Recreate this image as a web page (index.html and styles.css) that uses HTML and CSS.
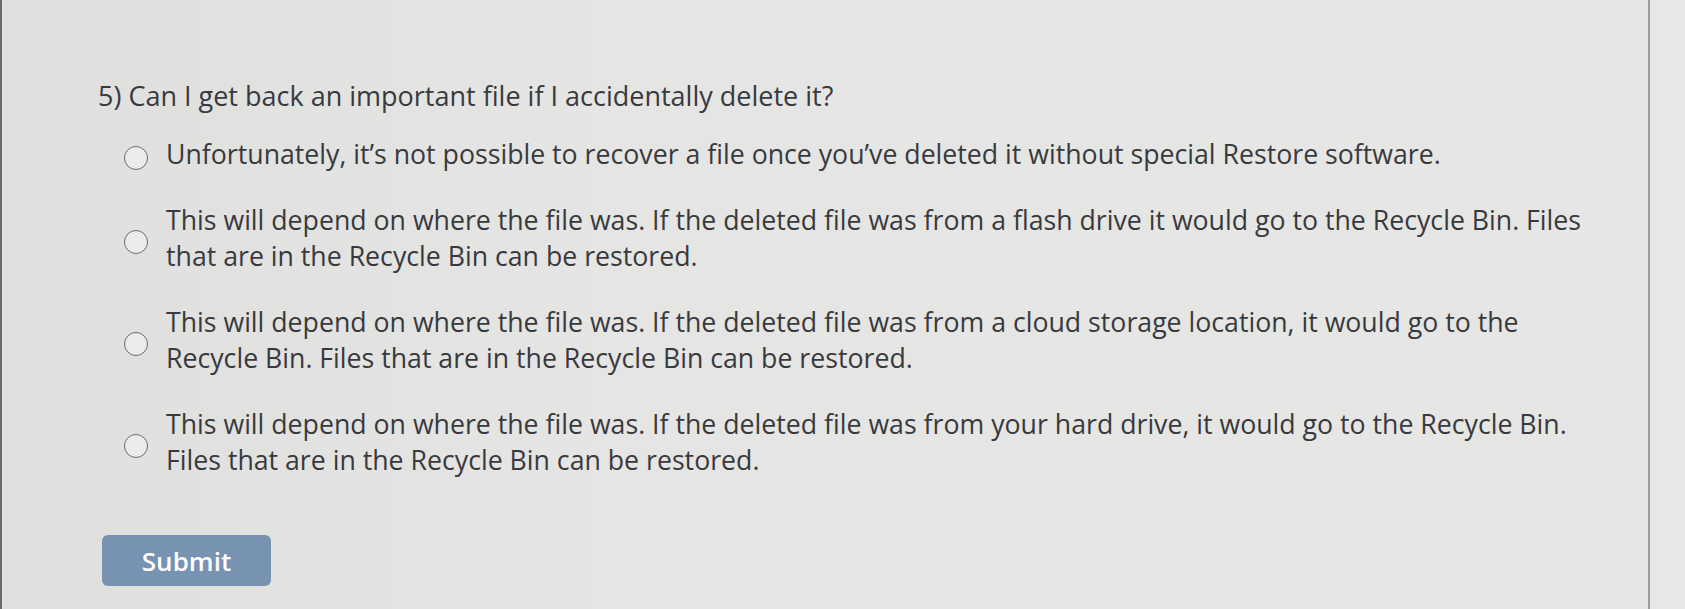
FILE: index.html
```html
<!DOCTYPE html>
<html lang="en">
<head>
<meta charset="utf-8">
<title>Question 5</title>
<link rel="stylesheet" href="styles.css">
</head>
<body>
<div class="page">
  <main class="panel">
    <form class="question">
      <p class="prompt">5) Can I get back an important file if I accidentally delete it?</p>
      <div class="options">
        <label class="option">
          <span class="radio"></span>
          <span class="label-text">Unfortunately, it’s not possible to recover a file once you’ve deleted it without special Restore software.</span>
        </label>
        <label class="option">
          <span class="radio"></span>
          <span class="label-text">This will depend on where the file was. If the deleted file was from a flash drive it would go to the Recycle Bin. Files<br>that are in the Recycle Bin can be restored.</span>
        </label>
        <label class="option">
          <span class="radio"></span>
          <span class="label-text">This will depend on where the file was. If the deleted file was from a cloud storage location, it would go to the<br>Recycle Bin. Files that are in the Recycle Bin can be restored.</span>
        </label>
        <label class="option">
          <span class="radio"></span>
          <span class="label-text">This will depend on where the file was. If the deleted file was from your hard drive, it would go to the Recycle Bin.<br>Files that are in the Recycle Bin can be restored.</span>
        </label>
      </div>
      <button type="button" class="submit">Submit</button>
    </form>
  </main>
  <aside class="gutter"></aside>
</div>
</body>
</html>
```
FILE: styles.css
```css
html, body {
  margin: 0;
  padding: 0;
  height: 100%;
}
body {
  background: #e4e4e3;
  font-family: "Open Sans", "Noto Sans", sans-serif;
  color: #383a3d;
}
.page {
  display: flex;
  height: 609px;
  border-left: 2px solid #6a6a6a;
  background: linear-gradient(90deg, #dfdfde 0%, #e5e5e4 35%, #e6e6e5 100%);
}
.panel {
  flex: none;
  width: 1648px;
  border-right: 2px solid #9d9d9f;
  box-sizing: border-box;
  padding: 78px 0 0 96px;
}
.gutter {
  flex: 1;
  background: #e7e7e6;
}
.question {
  margin: 0;
}
.prompt {
  margin: 0;
  font-size: 27px;
  line-height: 36px;
  white-space: nowrap;
}
.options {
  margin-top: 22px;
  padding-left: 26px;
  display: flex;
  flex-direction: column;
  gap: 30px;
}
.option {
  display: flex;
  align-items: center;
  gap: 18px;
  font-size: 26.7px;
  line-height: 36px;
  white-space: nowrap;
}
.radio {
  flex: none;
  width: 24px;
  height: 24px;
  margin-top: 8px;
  box-sizing: border-box;
  border: 1.8px solid #6b6c6e;
  border-radius: 50%;
  background: #ebebea;
}
.submit {
  display: block;
  margin: 57px 0 0 4px;
  width: 169px;
  height: 51px;
  border: none;
  border-radius: 6px;
  background: #7793b1;
  color: #ffffff;
  font-family: "Open Sans", "Noto Sans", sans-serif;
  font-size: 26px;
  font-weight: 600;
  padding: 0;
}
```
